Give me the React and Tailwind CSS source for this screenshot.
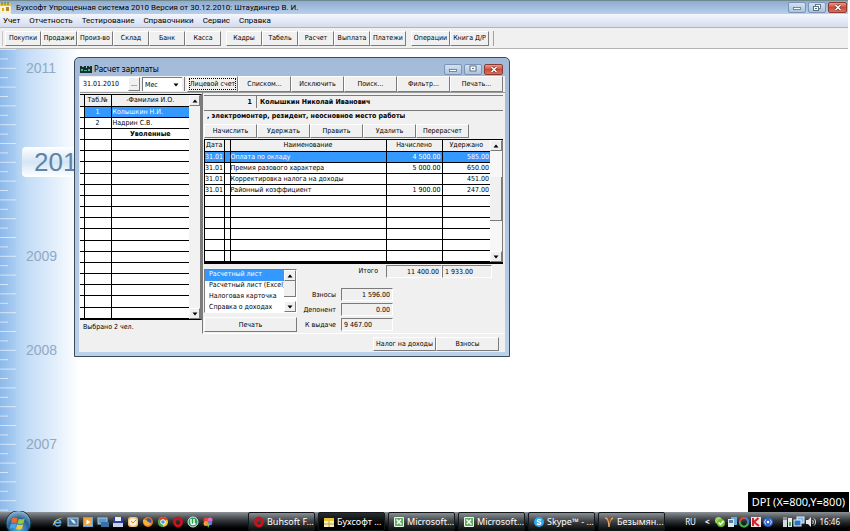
import { useState } from 'react';

const MENU = ['Учет', 'Отчетность', 'Тестирование', 'Справочники', 'Сервис', 'Справка'];

const TOOLBAR = [
  { width: 'w-[36px]', items: ['Покупки', 'Продажи', 'Произ-во', 'Склад', 'Банк', 'Касса'] },
  { width: 'w-[36px]', items: ['Кадры', 'Табель', 'Расчет', 'Выплата', 'Платежи'] },
  { width: 'w-[39px]', items: ['Операции', 'Книга Д/Р'] },
];

const EMPLOYEES = [
  { id: '1', name: 'Колышкин Н.И.' },
  { id: '2', name: 'Надрин С.В.' },
];

const ACCRUALS = [
  { date: '31.01', name: 'Оплата по окладу', plus: '4 500.00', minus: '585.00' },
  { date: '31.01', name: 'Премия разового характера', plus: '5 000.00', minus: '650.00' },
  { date: '31.01', name: 'Корректировка налога на доходы', plus: '', minus: '451.00' },
  { date: '31.01', name: 'Районный коэффициент', plus: '1 900.00', minus: '247.00' },
];

const REPORTS = ['Расчетный лист', 'Расчетный лист (Excel)', 'Налоговая карточка', 'Справка о доходах'];

const YEARS = ['2011', '2010', '2009', '2008', '2007'];

/**
 * Classic raised push button
 */
function PushButton({ children, className = '' }) {
  return (
    <button
      type="button"
      className={`flex items-center justify-center whitespace-nowrap border border-t-white border-l-white border-r-[#7b7b7b] border-b-[#7b7b7b] bg-[#f0f0f0] ${className}`}
    >
      {children}
    </button>
  );
}

/**
 * Caption buttons: minimize, restore, close
 */
function CaptionButtons({ restored = false }) {
  const base = 'flex h-[11px] items-center justify-center rounded-[2px] border';
  return (
    <div className="flex gap-[2px]">
      <button type="button" aria-label="Свернуть" className={`${base} w-[18px] border-[#7c95b4] bg-linear-to-b from-[#d3e2f2] to-[#a9c3df]`}>
        <svg width="10" height="7" viewBox="0 0 10 7">
          <rect x="1.5" y="3.5" width="7" height="2" fill="#fff" stroke="#5f6f83" strokeWidth="0.8" />
        </svg>
      </button>
      <button type="button" aria-label="Развернуть" className={`${base} w-[18px] border-[#7c95b4] bg-linear-to-b from-[#d3e2f2] to-[#a9c3df]`}>
        <svg width="10" height="8" viewBox="0 0 10 8">
          {restored && <rect x="3.5" y="0.5" width="5" height="4" fill="#fff" stroke="#5f6f83" strokeWidth="0.9" />}
          <rect x={restored ? 1.5 : 2} y={restored ? 2.5 : 1} width={restored ? 5 : 6} height={restored ? 4 : 5} fill="#fff" stroke="#5f6f83" />
          <rect x={restored ? 3 : 4} y={restored ? 4 : 3} width="2" height="1" fill="#5f6f83" />
        </svg>
      </button>
      <button type="button" aria-label="Закрыть" className={`${base} w-[19px] border-[#8e3a33] bg-linear-to-b from-[#e59a8c] via-[#cf4a36] to-[#d8705c]`}>
        <svg width="8" height="7" viewBox="0 0 8 7">
          <path d="M1.5 1l5 5M6.5 1l-5 5" stroke="#5b2a26" strokeWidth="2.6" />
          <path d="M1.5 1l5 5M6.5 1l-5 5" stroke="#fff" strokeWidth="1.6" />
        </svg>
      </button>
    </div>
  );
}

function Arrow({ up = false }) {
  return (
    <svg width="6" height="4" viewBox="0 0 6 4">
      <path d={up ? 'M0.5 3.5L3 0.5l2.5 3z' : 'M0.5 0.5L3 3.5l2.5-3z'} fill="#000" />
    </svg>
  );
}

function ScrollButton({ up = false }) {
  return (
    <PushButton className="h-[11px] w-full shrink-0">
      <Arrow up={up} />
    </PushButton>
  );
}

/**
 * Blue timeline strip with the years
 */
function Timeline() {
  return (
    <aside className="relative w-[80px] self-stretch bg-linear-to-r from-[#93bdec] via-[#c4ddf7] via-35% to-white">
      <svg className="absolute inset-0 h-full w-full" aria-hidden="true">
        <defs>
          <linearGradient id="ruler" x1="0" x2="1" y1="0" y2="0">
            <stop offset="0" stopColor="#86b4e8" stopOpacity="0.5" />
            <stop offset="1" stopColor="#a5cbf3" stopOpacity="0.5" />
          </linearGradient>
        </defs>
        <rect width="16" height="100%" fill="url(#ruler)" />
        {Array.from({ length: 50 }, (_, i) => (
          <line key={i} x1="0" x2={i % 2 ? 8 : 16} y1={i * 9.4 + 0.5} y2={i * 9.4 + 0.5} stroke="#fff" strokeOpacity="0.6" strokeWidth="1" />
        ))}
      </svg>
      <div className="relative flex flex-col gap-16 pt-1 text-[14px] text-[#8fa9c5]">
        {YEARS.map((year) =>
          year === '2010' ? (
            <div key={year} className="ml-[22px] flex h-[30px] items-center rounded-l-[4px] bg-linear-to-b from-white via-[#d3e5f5] to-white pl-3 text-[26px] text-[#5f83a8]">
              {year}
            </div>
          ) : (
            <div key={year} className="flex h-[30px] items-center pl-[26px]">{year}</div>
          )
        )}
      </div>
    </aside>
  );
}

function EmployeeTable({ selected, onSelect }) {
  return (
    <div className="flex h-[226px] w-[122px] border-y border-r-2 border-y-black border-r-[#7b7b7b] bg-white">
      <table className="h-full flex-1 table-fixed border-collapse">
        <thead>
          <tr className="h-[11px] bg-[#f0f0f0]">
            <th className="w-[4px] border-r border-b border-black p-0" />
            <th className="w-[27px] border-r border-b border-black p-0 font-normal">Таб.№</th>
            <th className="border-b border-black p-0 font-normal">-Фамилия И.О.</th>
          </tr>
        </thead>
        <tbody>
          {EMPLOYEES.map((e) => (
            <tr key={e.id} onClick={() => onSelect(e.id)} className={e.id === selected ? 'h-[11px] bg-[#3399ff] text-white' : 'h-[11px]'}>
              <td className="border-r border-b border-black bg-white p-0" />
              <td className="border-r border-b border-black p-0 text-center">{e.id}</td>
              <td className="border-b border-black p-0 pl-px">{e.name}</td>
            </tr>
          ))}
          {Array.from({ length: 17 }, (_, i) => (
            <tr key={i} className="h-[11px]">
              <td className="border-r border-b border-black p-0" />
              <td className="border-r border-b border-black p-0" />
              <td className="border-b border-black p-0 text-center font-bold">{i === 0 ? 'Уволенные' : ''}</td>
            </tr>
          ))}
        </tbody>
      </table>
      <div className="flex w-[11px] flex-col justify-between bg-[#f2f2f2]">
        <ScrollButton up />
        <ScrollButton />
      </div>
    </div>
  );
}

function AccrualTable() {
  return (
    <div className="flex h-[125px] border-t border-b-2 border-l border-black bg-white">
      <table className="h-full flex-1 table-fixed border-collapse">
        <thead>
          <tr className="h-[11px] bg-[#f0f0f0]">
            <th className="w-[19px] border-r border-b border-black p-0 font-normal">Дата</th>
            <th className="w-[6px] border-r border-b border-black p-0" />
            <th className="border-r border-b border-black p-0 font-normal">Наименование</th>
            <th className="w-[56px] border-r border-b border-black p-0 font-normal">Начислено</th>
            <th className="w-[48px] border-b border-black p-0 font-normal">Удержано</th>
          </tr>
        </thead>
        <tbody>
          {ACCRUALS.map((row, i) => (
            <tr key={row.name} className={i === 0 ? 'h-[11px] bg-[#3399ff] text-white' : 'h-[11px]'}>
              <td className="border-r border-b border-black p-0">{row.date}</td>
              <td className="border-r border-b border-black p-0" />
              <td className="border-r border-b border-black p-0">{row.name}</td>
              <td className="border-r border-b border-black p-0 pr-px text-right">{row.plus}</td>
              <td className="border-b border-black p-0 pr-px text-right">{row.minus}</td>
            </tr>
          ))}
          {Array.from({ length: 6 }, (_, i) => (
            <tr key={i} className="h-[11px]">
              <td className="border-r border-b border-black p-0" />
              <td className="border-r border-b border-black p-0" />
              <td className="border-r border-b border-black p-0" />
              <td className="border-r border-b border-black p-0" />
              <td className="border-b border-black p-0" />
            </tr>
          ))}
        </tbody>
      </table>
      <div className="flex w-[13px] flex-col border-r border-[#7b7b7b] bg-[#f7f7f7]">
        <ScrollButton up />
        <div className="h-[26px]" />
        <div className="h-[44px] border-r border-b border-[#7b7b7b] bg-[#f0f0f0]" />
        <div className="flex-1" />
        <ScrollButton />
      </div>
    </div>
  );
}

const FIELD = 'h-[13px] border border-t-[#7b7b7b] border-l-[#7b7b7b] border-r-white border-b-white bg-[#f0f0f0] px-[2px]';

function Totals() {
  return (
    <div className="grid grid-cols-[35px_52px] items-center gap-x-[5px] gap-y-[2px] text-right">
      <label htmlFor="fees">Взносы</label>
      <input id="fees" readOnly value="1 596.00" className={`${FIELD} w-full text-right`} />
      <label htmlFor="deponent">Депонент</label>
      <input id="deponent" readOnly value="0.00" className={`${FIELD} w-full text-right`} />
      <label htmlFor="payout" className="whitespace-nowrap">К выдаче</label>
      <input id="payout" readOnly value="9 467.00" className={`${FIELD} w-full`} />
    </div>
  );
}

function ReportPicker() {
  const [report, setReport] = useState(REPORTS[0]);

  return (
    <div className="w-[93px]">
      <div className="mb-1 flex h-[44px] border border-t-[#7b7b7b] border-l-[#7b7b7b] border-r-white border-b-white bg-white">
        <select
          size={4}
          aria-label="Отчет"
          value={report}
          onChange={(e) => setReport(e.target.value)}
          className="h-full min-w-0 flex-1 appearance-none overflow-hidden bg-white outline-none"
        >
          {REPORTS.map((r) => (
            <option key={r} value={r} className="h-[11px] min-h-0 overflow-hidden p-0 pl-1 leading-[11px] checked:bg-[#3399ff] checked:text-white">
              {r}
            </option>
          ))}
        </select>
        <div className="flex w-[12px] flex-col">
          <ScrollButton up />
          <div className="h-4 border-r border-b border-[#7b7b7b] bg-[#f0f0f0]" />
          <div className="flex-1" />
          <ScrollButton />
        </div>
      </div>
      <PushButton className="h-[15px] w-full">Печать</PushButton>
    </div>
  );
}

function PayrollWindow() {
  const [employee, setEmployee] = useState('1');

  return (
    <section className="absolute top-[8px] left-[74px] w-[436px] rounded-t-[5px] border border-[#3d4a5a] bg-linear-to-b from-[#a3bbd9] to-[#b9d1ea] px-1 pb-1 font-['DejaVu_Sans_Condensed','DejaVu_Sans',sans-serif] text-[7px] leading-[10px]">
      <header className="flex h-[18px] items-center justify-between pt-1 pr-[2px] pl-px">
        <div className="flex items-center gap-[2px]">
          <svg width="12" height="7" viewBox="0 0 12 7">
            <path d="M0 0h2v1h2V0h2v2h1V0h2v1h1V0h2v7H0z" fill="#16302c" />
            <path d="M1 3h2v2H1zM4 4h3v1H4zM8 3h2v2H8z" fill="#49b09a" />
          </svg>
          <h2 className="font-['Noto_Sans',sans-serif] text-[8px]">Расчет зарплаты</h2>
        </div>
        <CaptionButtons />
      </header>

      <div className="bg-[#f0f0f0] pl-px">
        <div className="flex h-[16px] items-stretch">
          <input aria-label="Дата" defaultValue="31.01.2010" className="my-px w-[48px] bg-white px-[3px]" />
          <PushButton className="my-px w-[12px]">...</PushButton>
          <div className="relative my-px ml-[2px] flex w-[40px] items-center border-t border-l border-[#7b7b7b] bg-white">
            <select aria-label="Период" className="w-full appearance-none pl-[2px] outline-none">
              <option>Мес</option>
            </select>
            <span className="pointer-events-none absolute right-[3px]"><Arrow /></span>
          </div>
          <div className="mx-[2px] my-px w-px bg-[#7b7b7b]" />
          <div className="flex flex-1 pr-[2px]">
            <PushButton className="flex-1 border-t-[#7b7b7b] border-l-[#7b7b7b]">
              <span className="outline-1 outline-dotted outline-black">Лицевой счет</span>
            </PushButton>
            {['Списком...', 'Исключить', 'Поиск...', 'Фильтр...', 'Печать...'].map((label) => (
              <PushButton key={label} className="w-[53px]">{label}</PushButton>
            ))}
          </div>
        </div>

        <div className="flex border-t border-[#9a9a9a]">
          <div className="pt-px">
            <EmployeeTable selected={employee} onSelect={setEmployee} />
            <p className="mt-[2px] pl-[3px]">Выбрано 2 чел.</p>
          </div>

          <div className="flex min-w-0 flex-1 flex-col border-b border-l border-b-white border-l-[#7b7b7b] pt-[2px] pr-[2px] pl-px">
            <div className="flex font-bold">
              <span className="h-[13px] w-[53px] border-t border-r border-[#7b7b7b] pt-px pr-1 text-right">1</span>
              <span className="h-[13px] flex-1 border-t border-[#7b7b7b] pt-px pl-[3px]">Колышкин Николай Иванович</span>
            </div>
            <p className="mt-[2px] h-[13px] border-t border-[#7b7b7b] pl-[3px] font-bold">, электромонтер, резидент, неосновное место работы</p>
            <div className="my-px flex h-[14px]">
              {['Начислить', 'Удержать', 'Править', 'Удалить', 'Перерасчет'].map((label) => (
                <PushButton key={label} className="w-[53px]">{label}</PushButton>
              ))}
            </div>
            <AccrualTable />
            <div className="flex gap-1">
              <div className="pt-[5px]">
                <ReportPicker />
              </div>
              <div className="flex-1">
                <div className="mt-px mb-[10px] flex items-start justify-end pr-[11px]">
                  <label htmlFor="total" className="pt-px pr-2">Итого</label>
                  <input id="total" readOnly value="11 400.00" className={`${FIELD} w-[56px] text-right`} />
                  <input aria-label="Итого удержано" readOnly value="1 933.00" className={`${FIELD} w-[50px]`} />
                </div>
                <Totals />
              </div>
            </div>
            <div className="h-px" />
          </div>
        </div>

        <div className="flex justify-end pt-[3px] pr-[6px] pb-px">
          <PushButton className="h-[14px] w-[63px]">Налог на доходы</PushButton>
          <PushButton className="h-[14px] w-[63px]">Взносы</PushButton>
        </div>
      </div>
    </section>
  );
}

/* Taskbar drawings, 12x12 each */
const QUICK = {
  ie: (
    <>
      <path d="M9.5 7.5H3.2C3.5 9.6 6.5 10 8 8.3L9.2 9C6.8 12 1.7 10.8 1.8 6.7 2 2.5 9.6 1.7 9.5 7.5zM3.3 5.8h4.4C7.3 3.7 3.9 3.7 3.3 5.8z" fill="#58b5f5" />
      <path d="M1 10C-.5 7 8 .5 11 2c-3-.2-8.5 3.5-10 8z" fill="#e6cf5e" />
    </>
  ),
  desktop: (
    <>
      <rect x="1" y="2" width="10" height="8" fill="#4a7ba8" stroke="#b7cfe4" />
      <path d="M3 3l4 1 2 4-3-1z" fill="#dcebf8" />
    </>
  ),
  media: (
    <>
      <rect x="1" y="1" width="10" height="10" fill="#5fa3dc" />
      <rect x="2" y="2" width="8" height="8" fill="#f4a23a" />
      <path d="M4.5 3.5L8.5 6l-4 2.5z" fill="#fff" />
    </>
  ),
  windows: (
    <>
      <rect x="1" y="2" width="9" height="6" fill="#5797cf" stroke="#a4c9e8" />
      <rect x="4" y="6" width="8" height="5" fill="#3b6ea1" />
    </>
  ),
  disk: (
    <>
      <rect x="1" y="1" width="10" height="10" fill="#2a3f9c" />
      <rect x="3" y="1" width="6" height="4" fill="#e8ecf5" />
      <rect x="1" y="7" width="10" height="4" fill="#c9cfe6" />
    </>
  ),
  outlook: (
    <>
      <rect x="1" y="1" width="10" height="10" rx="3" fill="#f3c274" />
      <circle cx="6" cy="6" r="3.8" fill="#fdf3df" />
      <path d="M4 5l2 2 3-3" fill="none" stroke="#d98621" />
    </>
  ),
  firefox: (
    <>
      <circle cx="6" cy="6" r="5" fill="#e6761c" />
      <circle cx="6.5" cy="5" r="2.8" fill="#3a57a8" />
      <path d="M1 4c2-1 4 0 5 2l3 1c-1 4-8 4-8-3z" fill="#f6b23b" />
    </>
  ),
  chrome: (
    <>
      <circle cx="6" cy="6" r="5" fill="#f2c832" />
      <path d="M6 6L1.7 3.5A5 5 0 0 1 10.3 3.5z" fill="#dd3b2c" />
      <path d="M6 6L1.7 3.5A5 5 0 0 0 6 11z" fill="#3aa64b" />
      <circle cx="6" cy="6" r="2.3" fill="#4f94e8" stroke="#fff" />
    </>
  ),
  opera: <ellipse cx="6" cy="6" rx="3.5" ry="4" fill="none" stroke="#c8141c" strokeWidth="2.8" />,
  utorrent: (
    <>
      <circle cx="6" cy="6" r="5" fill="#2fa05a" stroke="#cfeedd" />
      <path d="M4 3v4c0 2 3 2 3 0V3M7 7l1.5 1.5" fill="none" stroke="#fff" strokeWidth="1.4" />
    </>
  ),
  paint: (
    <>
      <circle cx="4" cy="4" r="2.5" fill="#e4453a" />
      <circle cx="8" cy="4" r="2.5" fill="#ef6aa8" />
      <circle cx="4" cy="7.5" r="2.5" fill="#f09a38" />
      <circle cx="8" cy="7" r="2.3" fill="#5c7de0" />
      <path d="M5 7l3 1-2 4z" fill="#8fc24a" />
    </>
  ),
  buhsoft: (
    <>
      <rect x="1" y="2" width="10" height="9" fill="#f7eeb8" />
      <path d="M1 2h10v3H1z" fill="#e8c534" />
      <path d="M6 5v6M1 8h10" stroke="#b9a04b" />
    </>
  ),
  excel: (
    <>
      <rect x="1" y="1" width="10" height="10" rx="1" fill="#eef7ec" />
      <rect x="2" y="2" width="8" height="8" fill="#5fae62" />
      <path d="M3.5 3.5l5 5M8 3.5L4 8" stroke="#fff" strokeWidth="1.4" />
    </>
  ),
  skype: (
    <>
      <circle cx="6" cy="6" r="5" fill="#2caaf0" />
      <path d="M8 4.2C6.5 3 4.2 3.6 4.3 4.9c.2 1.3 3.5.8 3.5 2.3C7.7 8.5 5 8.7 3.9 7.5" fill="none" stroke="#fff" strokeWidth="1.3" />
    </>
  ),
  brush: (
    <>
      <path d="M2 2c3 0 4 4 4 9M6 11c0-5 1-8 4-9" fill="none" stroke="#e0a564" strokeWidth="1.5" />
      <path d="M5 2h3L6.5 8z" fill="#8c5127" />
    </>
  ),
  phone: (
    <>
      <circle cx="4.5" cy="4.5" r="3.5" fill="#9bd95c" />
      <circle cx="7" cy="7" r="4" fill="#6cc02e" />
      <path d="M4.5 6.5l2 2L9.5 5" fill="none" stroke="#fff" strokeWidth="1.5" />
    </>
  ),
  device: (
    <>
      <rect x="5" y="1" width="6" height="8" fill="#6ea7d8" />
      <rect x="2" y="3" width="6" height="8" fill="#dfe6ec" />
      <rect x="3" y="4" width="4" height="3" fill="#53809f" />
    </>
  ),
  swirl: (
    <g fill="none" strokeWidth="2.2">
      <path d="M2 6a4 4 0 0 1 5-4" stroke="#e04b36" />
      <path d="M7 2a4 4 0 0 1 3 5" stroke="#3f80e0" />
      <path d="M10 7a4 4 0 0 1-8-1" stroke="#3fae4b" />
    </g>
  ),
  kaspersky: (
    <>
      <rect x="1" y="1" width="10" height="10" fill="#f2e4e2" />
      <path d="M3 2v8M8.5 2L4 6l5 4" fill="none" stroke="#d2232a" strokeWidth="2" />
    </>
  ),
  wifi: (
    <>
      <circle cx="6" cy="6" r="5" fill="#2d62c8" />
      <circle cx="6" cy="6" r="1.3" fill="#fff" />
      <path d="M3.8 3.5a3.5 3.5 0 0 0 0 5M8.2 3.5a3.5 3.5 0 0 1 0 5" fill="none" stroke="#cfe0ff" />
    </>
  ),
  power: (
    <>
      <rect x="2" y="4" width="4" height="7" fill="#d5d9dc" />
      <path d="M3 1v3M5 1v3" stroke="#d5d9dc" />
      <rect x="7" y="2" width="4" height="9" fill="#e6ecea" />
      <rect x="8" y="6" width="2" height="4" fill="#43a855" />
    </>
  ),
  network: (
    <>
      <rect x="4" y="1" width="7" height="6" fill="#79b6ea" stroke="#e6eef5" />
      <rect x="1" y="4" width="7" height="6" fill="#2b76bf" stroke="#e6eef5" />
    </>
  ),
  volume: (
    <>
      <path d="M1 4h2l3-3v10L3 8H1z" fill="#e8e8e8" />
      <path d="M7.5 4c1 1 1 3 0 4M9 2.5c2 2 2 5 0 7" fill="none" stroke="#e8e8e8" />
    </>
  ),
};

function Glyph({ name }) {
  return (
    <svg width="12" height="12" viewBox="0 0 12 12" className="shrink-0" aria-hidden="true">
      {QUICK[name]}
    </svg>
  );
}

const LAUNCH = ['ie', 'desktop', 'media', 'windows', 'disk', 'outlook', 'firefox', 'chrome', 'opera', 'utorrent', 'paint'];

const TASKS = [
  { icon: 'opera', label: 'Buhsoft F...' },
  { icon: 'buhsoft', label: 'Бухсофт ...', active: true },
  { icon: 'excel', label: 'Microsoft...' },
  { icon: 'excel', label: 'Microsoft...' },
  { icon: 'skype', label: 'Skype™ - ...' },
  { icon: 'brush', label: 'Безымян...' },
];

function Taskbar() {
  return (
    <footer className="relative flex h-[19px] items-center bg-linear-to-b from-[#8d9297] via-[#33373b] via-45% to-black font-['Noto_Sans',sans-serif] text-[8px] leading-[12px] text-white">
      <button type="button" aria-label="Пуск" className="ml-[5px] shrink-0">
        <svg width="27" height="21" viewBox="0 0 27 21">
          <defs>
            <radialGradient id="orb" cx="0.5" cy="0.75" r="0.7">
              <stop offset="0" stopColor="#4fb8e8" />
              <stop offset="0.6" stopColor="#245f92" />
              <stop offset="1" stopColor="#8fb3cc" />
            </radialGradient>
          </defs>
          <circle cx="13.5" cy="12" r="12.5" fill="url(#orb)" stroke="#16324a" />
          <path d="M7 7.5c2-1.2 3.8-1 5.6-.2L11.5 12c-1.8-.9-3.6-.8-5.5.3z" fill="#ee6a31" />
          <path d="M13.7 7.7c2 .9 3.9.9 6-.2L18.5 12c-2 1.2-3.9 1.2-5.9.3z" fill="#97c93d" />
          <path d="M5.7 13.3c1.9-1 3.7-1.1 5.5-.2L10 17.5c-1.7-.8-3.5-.7-5.3.3z" fill="#4aa3e6" />
          <path d="M12.3 13.5c2 .8 3.9.8 5.9-.3L17 17.8c-2 1.1-3.9 1-5.9 0z" fill="#fbc926" />
        </svg>
      </button>
      <nav className="ml-5 flex shrink-0 gap-[3px]">
        {LAUNCH.map((name) => (
          <button key={name} type="button" aria-label={name}><Glyph name={name} /></button>
        ))}
      </nav>
      <div className="ml-[34px] flex min-w-0 flex-1 gap-[3px] self-stretch text-[9px]">
        {TASKS.map((task, i) => (
          <button
            key={i}
            type="button"
            className={`flex w-[67px] items-center gap-[2px] overflow-hidden rounded-[2px] border border-[#15181a] pl-1 whitespace-nowrap ${
              task.active ? 'bg-linear-to-b from-[#2b2e31] to-black' : 'bg-linear-to-b from-[#8b9095] via-[#44484c] via-45% to-[#0c0d0e]'
            }`}
          >
            <Glyph name={task.icon} />
            <span>{task.label}</span>
          </button>
        ))}
      </div>
      <div className="flex shrink-0 items-center pr-[10px]">
        <span className="mr-[9px]">RU</span>
        <span className="mr-1 font-bold">&lt;</span>
        {['phone', 'device', 'swirl', 'kaspersky', 'wifi'].map((name) => <Glyph key={name} name={name} />)}
        <span className="w-[7px]" />
        {['power', 'network', 'volume'].map((name) => <Glyph key={name} name={name} />)}
        <time className="ml-[3px]">16:46</time>
      </div>
    </footer>
  );
}

export default function App() {
  return (
    <div className="flex min-h-screen flex-col overflow-hidden bg-white font-['Liberation_Sans',Arial,sans-serif] text-black">
      <div className="pr-[2px] font-['Roboto',sans-serif] text-[8px] leading-[12px]">
        <header className="flex h-[14px] items-center justify-between border-t border-[#6f8a8c] bg-linear-to-b from-[#8fabd0] to-[#b9d0ea] pr-px">
          <div className="flex items-center gap-1">
            <svg width="12" height="12" viewBox="0 0 12 12">
              <rect x="0" y="1" width="11" height="11" fill="#f6f2d2" />
              <path d="M0 1h11v3H0z" fill="#e6c62f" />
              <path d="M2 0v3M5 0v3M8 0v3" stroke="#7a6a2a" />
              <rect x="2" y="6" width="2" height="3" fill="#d3a92a" />
              <rect x="6" y="5" width="3" height="4" fill="#b8862c" />
            </svg>
            <h1>Бухсофт Упрощенная система 2010 Версия от 30.12.2010: Штаудингер В. И.</h1>
          </div>
          <CaptionButtons restored />
        </header>

        <nav className="flex h-[13px] items-center gap-[9px] bg-linear-to-b from-[#f4f7fd] to-[#d5dcee] pl-[3px]">
          {MENU.map((item) => (
            <button key={item} type="button">{item}</button>
          ))}
        </nav>

        <div className="flex h-[22px] items-center border-t border-b border-[#b4b4b4] bg-[#f0f0f0] pl-[2px] font-['DejaVu_Sans_Condensed','DejaVu_Sans',sans-serif] text-[7px]">
          <div className="flex gap-[5px] border-r border-l border-r-[#a0a0a0] border-l-[#c8c8c8] pr-1 pl-[2px]">
            {TOOLBAR.map((group, i) => (
              <div key={i} className="flex">
                {group.items.map((label) => (
                  <PushButton key={label} className={`h-[15px] ${group.width}`}>{label}</PushButton>
                ))}
              </div>
            ))}
          </div>
        </div>
      </div>

      <main className="relative flex flex-1">
        <Timeline />
        <PayrollWindow />
        <div className="absolute right-px bottom-0 bg-black px-1 py-[2px] font-['Noto_Sans',sans-serif] text-[11px] leading-4 text-white">
          DPI (X=800,Y=800)
        </div>
      </main>

      <Taskbar />
    </div>
  );
}
